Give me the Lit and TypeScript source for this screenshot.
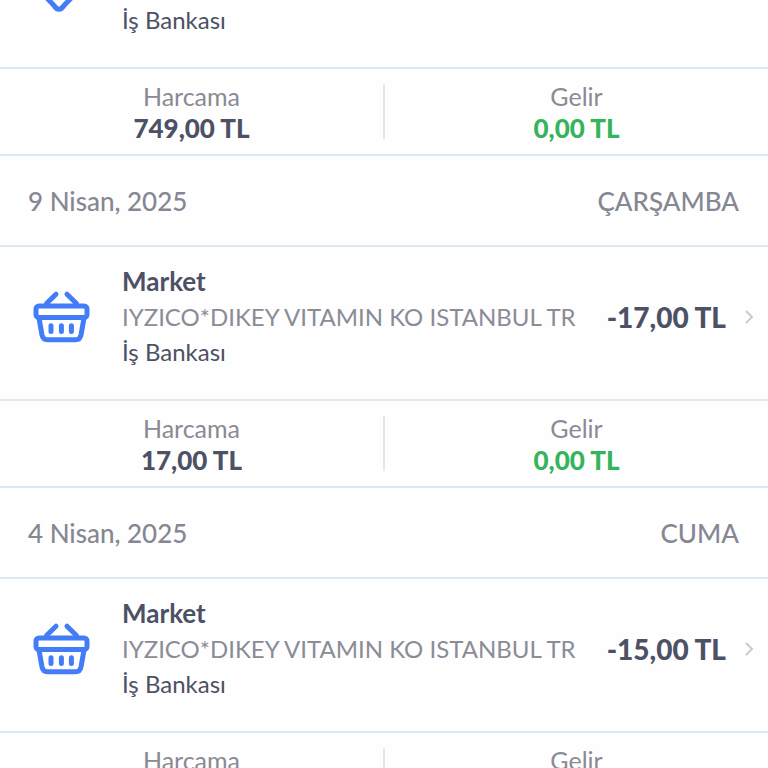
import { LitElement, html, svg, css, nothing } from "lit";
import { customElement, property } from "lit/decorators.js";

interface Day {
  date?: string;
  weekday?: string;
  category?: string;
  description?: string;
  bank: string;
  amount?: string;
  spent: string;
  income: string;
}

const DAYS: Day[] = [
  { bank: "İş Bankası", spent: "749,00 TL", income: "0,00 TL" },
  {
    date: "9 Nisan, 2025", weekday: "ÇARŞAMBA", category: "Market",
    description: "IYZICO*DIKEY VITAMIN KO ISTANBUL TR", bank: "İş Bankası",
    amount: "-17,00 TL", spent: "17,00 TL", income: "0,00 TL",
  },
  {
    date: "4 Nisan, 2025", weekday: "CUMA", category: "Market",
    description: "IYZICO*DIKEY VITAMIN KO ISTANBUL TR", bank: "İş Bankası",
    amount: "-15,00 TL", spent: "15,00 TL", income: "0,00 TL",
  },
];

const basket = svg`
  <path d="M15.500 14.500 L25 5.200 M45.500 14.500 L36 5.200"/>
  <rect x="5" y="17" width="51" height="11.500" rx="3"/>
  <path d="M8 29 L11 46 Q12 50.800 16.500 50.800 H44.500 Q49 50.800 50 46 L53 29"/>
  <path d="M20 36.800 V42.400 M30.400 36.800 V42.400 M40.400 36.800 V42.400"/>`;

@customElement("day-section")
export class DaySection extends LitElement {
  @property({ attribute: false }) day!: Day;

  static styles = css`
    :host { display: block; }
    .head, .item, .summary { border-bottom: 2px solid #dbe9f4; }
    .head {
      display: flex; align-items: center; justify-content: space-between;
      margin: 0; padding: 27px 29px 26px 28px; color: #858792;
      font-size: 26px; line-height: 36px; font-weight: 500;
    }
    .item {
      box-sizing: border-box; width: 100%; display: flex; align-items: center;
      padding: 17px 14px 30px 31px; margin: 0;
      border-width: 0 0 2px; background: none; font: inherit;
      text-align: left; color: #4d5165; cursor: pointer;
    }
    .item.partial { align-items: flex-start; padding-top: 0; }
    .icon {
      flex: none; width: 60px; height: 56px; margin-right: 31px;
      fill: none; stroke: #427cf7; stroke-width: 5;
      stroke-linecap: round; stroke-linejoin: round;
    }
    .tip { height: 16px; }
    .text { flex: 1; min-width: 0; display: flex; flex-direction: column; line-height: 35px; font-size: 24px; }
    .partial .text { padding-top: 2px; }
    .category { font-size: 26px; font-weight: 700; }
    .description { color: #8a8c96; white-space: nowrap; }
    .amount { font-size: 28px; line-height: 36px; font-weight: 900; white-space: nowrap; }
    .chevron { flex: none; width: 10px; height: 18px; margin-left: 18px; fill: none; stroke: #cbcbcf; stroke-width: 2; }
    .summary {
      display: grid; grid-template-columns: 1fr 2px 1fr;
      text-align: center; line-height: 32px; padding: 11px 0 10px;
    }
    .total { margin: 0; }
    .total dt { font-size: 25px; color: #8a8a94; }
    .total dd { margin: 0; font-size: 26px; font-weight: 900; color: #4d5165; }
    .total .income { color: #34b45c; }
    .divider { background: #dbe9f4; margin: 4px 0 5px; }
  `;

  render() {
    const d = this.day;
    return html`
      ${d.date ? html`<h2 class="head"><span>${d.date}</span><span>${d.weekday}</span></h2>` : nothing}
      <button class="item ${d.category ? "" : "partial"}">
        ${d.category
          ? html`<svg class="icon" viewBox="0 0 60 56" aria-hidden="true">${basket}</svg>`
          : html`<svg class="icon tip" viewBox="0 0 60 16" aria-hidden="true"><path d="M10 -8 L23 5.500 Q28 13 33 5.500 L46 -8"/></svg>`}
        <span class="text">
          ${d.category ? html`<span class="category">${d.category}</span><span class="description">${d.description}</span>` : nothing}
          <span>${d.bank}</span>
        </span>
        ${d.amount
          ? html`<span class="amount">${d.amount}</span>
              <svg class="chevron" viewBox="0 0 10 18" aria-hidden="true"><path d="M2 3 L8 9 L2 15"/></svg>`
          : nothing}
      </button>
      <div class="summary">
        <dl class="total"><dt>Harcama</dt><dd>${d.spent}</dd></dl>
        <span class="divider"></span>
        <dl class="total"><dt>Gelir</dt><dd class="income">${d.income}</dd></dl>
      </div>`;
  }
}

@customElement("app-root")
export class AppRoot extends LitElement {
  static styles = css`
    :host {
      display: block; height: 100vh; overflow: hidden; background: #fefefe;
      font-family: Lato, "Noto Sans", sans-serif;
    }
  `;

  render() {
    return html`<main>${DAYS.map((d) => html`<day-section .day=${d}></day-section>`)}</main>`;
  }
}
